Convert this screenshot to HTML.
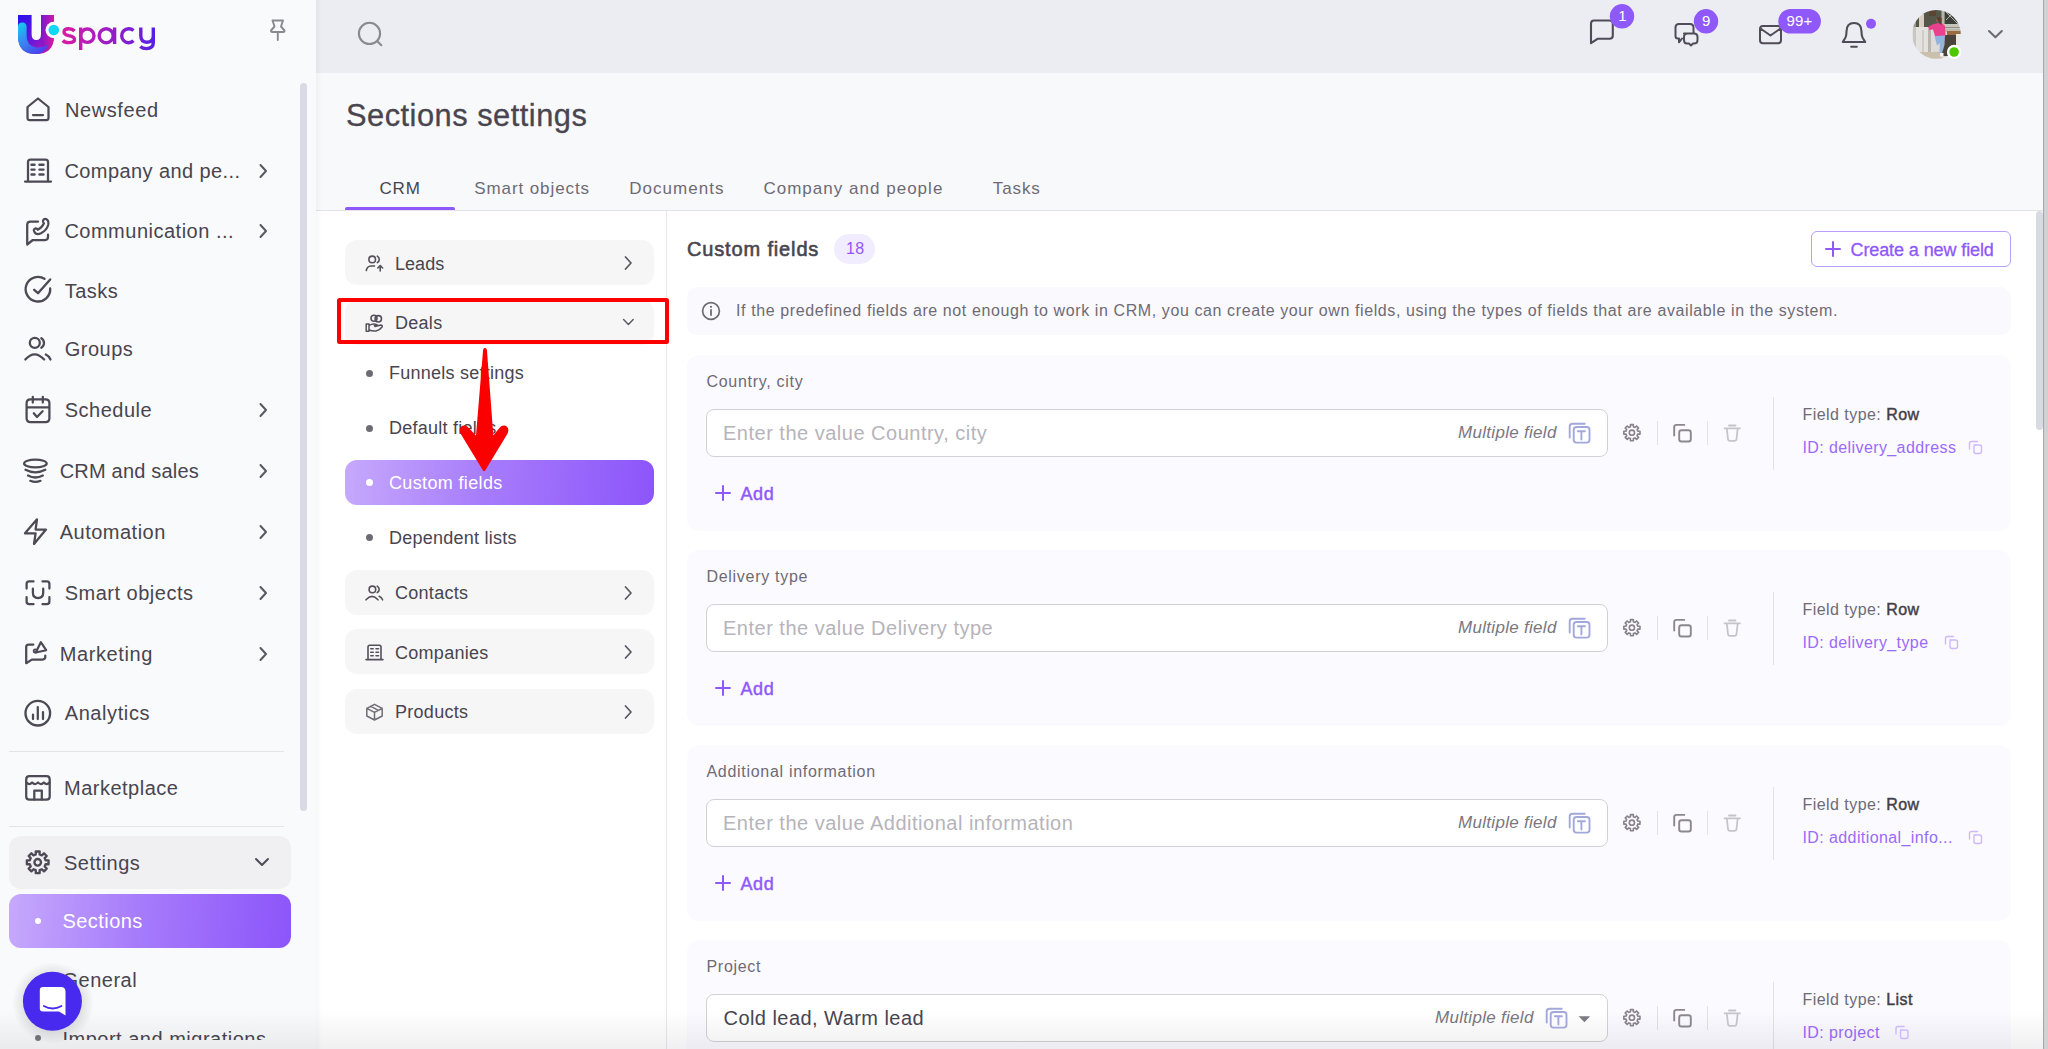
<!DOCTYPE html>
<html><head><meta charset="utf-8"><style>
html,body{margin:0;padding:0;}
body{width:2048px;height:1049px;overflow:hidden;position:relative;background:#ffffff;font-family:"Liberation Sans", sans-serif;}
.t{position:absolute;white-space:nowrap;line-height:1;font-family:"Liberation Sans", sans-serif;}
svg{overflow:visible}
</style></head><body>
<div style="position:absolute;left:0px;top:0px;width:316px;height:1049px;background:#f9fafb;"></div><div style="position:absolute;left:316px;top:0px;width:1727px;height:73px;background:#ecedf2;"></div><div style="position:absolute;left:316px;top:73px;width:1727px;height:137px;background:#f8f9fb;"></div><div style="position:absolute;left:316px;top:210px;width:1727px;height:1px;background:#e3e3e6;"></div><div style="position:absolute;left:316px;top:211px;width:1727px;height:838px;background:#ffffff;"></div><div style="position:absolute;left:316px;top:0px;width:6px;height:1049px;background:linear-gradient(to right,rgba(0,0,0,0.035),rgba(0,0,0,0));"></div><div style="position:absolute;left:666px;top:211px;width:1px;height:838px;background:#e8e8eb;"></div><div style="position:absolute;left:2043px;top:0px;width:1px;height:1049px;background:#a6a6a8;"></div><div style="position:absolute;left:2044px;top:0px;width:4px;height:1049px;background:#d0d1d3;"></div><div style="position:absolute;left:2036px;top:211px;width:7px;height:219px;background:#d9dbe3;border-radius:4px;"></div><div style="position:absolute;left:300px;top:83px;width:7px;height:728px;background:#d9dae3;border-radius:4px;"></div><div class="t" style="left:64.9px;top:99.77px;font-size:20px;color:#48454f;font-weight:400;letter-spacing:0.6px;font-style:normal;">Newsfeed</div><div class="t" style="left:64.4px;top:160.67px;font-size:20px;color:#48454f;font-weight:400;letter-spacing:0.42px;font-style:normal;">Company and pe...</div><svg style="position:absolute;left:256.5px;top:162.6px;" width="12" height="16" viewBox="0 0 12 16" fill="none"><path d="M3.5 2 L9 8 L3.5 14" stroke="#5a5761" stroke-width="2" stroke-linecap="round" stroke-linejoin="round"/></svg><div class="t" style="left:64.4px;top:221.47px;font-size:20px;color:#48454f;font-weight:400;letter-spacing:0.5px;font-style:normal;">Communication ...</div><svg style="position:absolute;left:256.5px;top:223.4px;" width="12" height="16" viewBox="0 0 12 16" fill="none"><path d="M3.5 2 L9 8 L3.5 14" stroke="#5a5761" stroke-width="2" stroke-linecap="round" stroke-linejoin="round"/></svg><div class="t" style="left:64.7px;top:280.77px;font-size:20px;color:#48454f;font-weight:400;letter-spacing:0.5px;font-style:normal;">Tasks</div><div class="t" style="left:64.7px;top:339.27px;font-size:20px;color:#48454f;font-weight:400;letter-spacing:0.5px;font-style:normal;">Groups</div><div class="t" style="left:64.7px;top:400.47px;font-size:20px;color:#48454f;font-weight:400;letter-spacing:0.5px;font-style:normal;">Schedule</div><svg style="position:absolute;left:256.5px;top:402.4px;" width="12" height="16" viewBox="0 0 12 16" fill="none"><path d="M3.5 2 L9 8 L3.5 14" stroke="#5a5761" stroke-width="2" stroke-linecap="round" stroke-linejoin="round"/></svg><div class="t" style="left:59.7px;top:461.07px;font-size:20px;color:#48454f;font-weight:400;letter-spacing:0.2px;font-style:normal;">CRM and sales</div><svg style="position:absolute;left:256.5px;top:463px;" width="12" height="16" viewBox="0 0 12 16" fill="none"><path d="M3.5 2 L9 8 L3.5 14" stroke="#5a5761" stroke-width="2" stroke-linecap="round" stroke-linejoin="round"/></svg><div class="t" style="left:59.7px;top:522.27px;font-size:20px;color:#48454f;font-weight:400;letter-spacing:0.5px;font-style:normal;">Automation</div><svg style="position:absolute;left:256.5px;top:524.2px;" width="12" height="16" viewBox="0 0 12 16" fill="none"><path d="M3.5 2 L9 8 L3.5 14" stroke="#5a5761" stroke-width="2" stroke-linecap="round" stroke-linejoin="round"/></svg><div class="t" style="left:64.7px;top:583.47px;font-size:20px;color:#48454f;font-weight:400;letter-spacing:0.5px;font-style:normal;">Smart objects</div><svg style="position:absolute;left:256.5px;top:585.4px;" width="12" height="16" viewBox="0 0 12 16" fill="none"><path d="M3.5 2 L9 8 L3.5 14" stroke="#5a5761" stroke-width="2" stroke-linecap="round" stroke-linejoin="round"/></svg><div class="t" style="left:59.7px;top:644.17px;font-size:20px;color:#48454f;font-weight:400;letter-spacing:0.6px;font-style:normal;">Marketing</div><svg style="position:absolute;left:256.5px;top:646.1px;" width="12" height="16" viewBox="0 0 12 16" fill="none"><path d="M3.5 2 L9 8 L3.5 14" stroke="#5a5761" stroke-width="2" stroke-linecap="round" stroke-linejoin="round"/></svg><div class="t" style="left:64.7px;top:703.17px;font-size:20px;color:#48454f;font-weight:400;letter-spacing:0.6px;font-style:normal;">Analytics</div><div class="t" style="left:64.0px;top:778.47px;font-size:20px;color:#48454f;font-weight:400;letter-spacing:0.5px;font-style:normal;">Marketplace</div><div style="position:absolute;left:9px;top:751px;width:275px;height:1px;background:#e4e4e8;"></div><div style="position:absolute;left:9px;top:826px;width:275px;height:1px;background:#e4e4e8;"></div><div style="position:absolute;left:9px;top:836px;width:282px;height:53px;background:#f0f0f3;border-radius:12px;"></div><div class="t" style="left:64.0px;top:852.67px;font-size:20px;color:#48454f;font-weight:400;letter-spacing:0.5px;font-style:normal;">Settings</div><svg style="position:absolute;left:254.0px;top:857.0px;" width="16.0" height="10.0" viewBox="0 0 16 10" fill="none"><path d="M2 2 L8 8 L14 2" stroke="#4f4b57" stroke-width="2" stroke-linecap="round" stroke-linejoin="round"/></svg><div style="position:absolute;left:9px;top:894px;width:282px;height:54px;background:linear-gradient(95deg,#c6a9fc 0%,#a77cfb 45%,#8c55fa 100%);border-radius:12px;"></div><div style="position:absolute;left:35px;top:918px;width:6px;height:6px;background:#fff;border-radius:50%;"></div><div class="t" style="left:62.5px;top:911.17px;font-size:20px;color:#ffffff;font-weight:400;letter-spacing:0.45px;font-style:normal;">Sections</div><div style="position:absolute;left:35px;top:977px;width:6px;height:6px;background:#6e6b75;border-radius:50%;"></div><div class="t" style="left:62.5px;top:969.87px;font-size:20px;color:#48454f;font-weight:400;letter-spacing:0.5px;font-style:normal;">General</div><div style="position:absolute;left:34.8px;top:1035px;width:6.400000000000006px;height:6.400000000000091px;background:#7a7780;border-radius:50%;"></div><div style="position:absolute;left:0;top:1000px;width:300px;height:40px;overflow:hidden"><div class="t" style="left:62.5px;top:29.07px;font-size:20px;color:#48454f;font-weight:400;letter-spacing:0.5px;font-style:normal;">Import and migrations</div></div><div class="t" style="left:346.0px;top:100.83px;font-size:30.8px;color:#48454f;font-weight:400;letter-spacing:0.5px;font-style:normal;-webkit-text-stroke:0.3px #48454f;">Sections settings</div><div class="t" style="left:379.4px;top:180.11px;font-size:17px;color:#48454f;font-weight:400;letter-spacing:0.9px;font-style:normal;">CRM</div><div class="t" style="left:474.3px;top:180.11px;font-size:17px;color:#6e6b75;font-weight:400;letter-spacing:0.9px;font-style:normal;">Smart objects</div><div class="t" style="left:629.3px;top:180.11px;font-size:17px;color:#6e6b75;font-weight:400;letter-spacing:1.02px;font-style:normal;">Documents</div><div class="t" style="left:763.4px;top:180.11px;font-size:17px;color:#6e6b75;font-weight:400;letter-spacing:1.02px;font-style:normal;">Company and people</div><div class="t" style="left:992.8px;top:180.11px;font-size:17px;color:#6e6b75;font-weight:400;letter-spacing:0.9px;font-style:normal;">Tasks</div><div style="position:absolute;left:345px;top:207px;width:110px;height:3px;background:#8f58fb;border-radius:2px 2px 0 0;"></div><div style="position:absolute;left:345px;top:240px;width:309px;height:45px;background:#f6f6f7;border-radius:12px;"></div><div class="t" style="left:395.0px;top:254.76px;font-size:18px;color:#48454f;font-weight:400;letter-spacing:0.05px;font-style:normal;">Leads</div><svg style="position:absolute;left:622px;top:254.5px;" width="12" height="16" viewBox="0 0 12 16" fill="none"><path d="M3.5 2 L9 8 L3.5 14" stroke="#5a5761" stroke-width="1.7" stroke-linecap="round" stroke-linejoin="round"/></svg><div style="position:absolute;left:345px;top:300px;width:309px;height:45px;background:#f6f6f7;border-radius:12px;"></div><div class="t" style="left:395.0px;top:314.26px;font-size:18px;color:#48454f;font-weight:400;letter-spacing:0.28px;font-style:normal;">Deals</div><svg style="position:absolute;left:621.6px;top:318.0px;" width="12.8" height="8.0" viewBox="0 0 16 10" fill="none"><path d="M2 2 L8 8 L14 2" stroke="#5a5761" stroke-width="1.8" stroke-linecap="round" stroke-linejoin="round"/></svg><div style="position:absolute;left:345px;top:570px;width:309px;height:45px;background:#f6f6f7;border-radius:12px;"></div><div class="t" style="left:395.0px;top:584.06px;font-size:18px;color:#48454f;font-weight:400;letter-spacing:0.28px;font-style:normal;">Contacts</div><svg style="position:absolute;left:622px;top:584.5px;" width="12" height="16" viewBox="0 0 12 16" fill="none"><path d="M3.5 2 L9 8 L3.5 14" stroke="#5a5761" stroke-width="1.7" stroke-linecap="round" stroke-linejoin="round"/></svg><div style="position:absolute;left:345px;top:629px;width:309px;height:45px;background:#f6f6f7;border-radius:12px;"></div><div class="t" style="left:395.0px;top:643.66px;font-size:18px;color:#48454f;font-weight:400;letter-spacing:0.28px;font-style:normal;">Companies</div><svg style="position:absolute;left:622px;top:643.5px;" width="12" height="16" viewBox="0 0 12 16" fill="none"><path d="M3.5 2 L9 8 L3.5 14" stroke="#5a5761" stroke-width="1.7" stroke-linecap="round" stroke-linejoin="round"/></svg><div style="position:absolute;left:345px;top:689px;width:309px;height:45px;background:#f6f6f7;border-radius:12px;"></div><div class="t" style="left:395.0px;top:703.26px;font-size:18px;color:#48454f;font-weight:400;letter-spacing:0.28px;font-style:normal;">Products</div><svg style="position:absolute;left:622px;top:703.5px;" width="12" height="16" viewBox="0 0 12 16" fill="none"><path d="M3.5 2 L9 8 L3.5 14" stroke="#5a5761" stroke-width="1.7" stroke-linecap="round" stroke-linejoin="round"/></svg><div style="position:absolute;left:366px;top:369.5px;width:7px;height:7.0px;background:#6e6b75;border-radius:50%;"></div><div class="t" style="left:389.0px;top:364.06px;font-size:18px;color:#48454f;font-weight:400;letter-spacing:0.25px;font-style:normal;">Funnels settings</div><div style="position:absolute;left:366px;top:424.5px;width:7px;height:7.0px;background:#6e6b75;border-radius:50%;"></div><div class="t" style="left:389.0px;top:419.26px;font-size:18px;color:#48454f;font-weight:400;letter-spacing:0.25px;font-style:normal;">Default fields</div><div style="position:absolute;left:366px;top:533.9px;width:7px;height:7.0px;background:#6e6b75;border-radius:50%;"></div><div class="t" style="left:389.0px;top:529.26px;font-size:18px;color:#48454f;font-weight:400;letter-spacing:0.25px;font-style:normal;">Dependent lists</div><div style="position:absolute;left:345px;top:460px;width:309px;height:45px;background:linear-gradient(95deg,#c6a9fc 0%,#a77cfb 45%,#8c55fa 100%);border-radius:12px;"></div><div style="position:absolute;left:366px;top:479px;width:7px;height:7px;background:#fff;border-radius:50%;"></div><div class="t" style="left:389.0px;top:474.16px;font-size:18px;color:#ffffff;font-weight:400;letter-spacing:0.35px;font-style:normal;">Custom fields</div><div style="position:absolute;left:337px;top:298px;width:332px;height:46px;border:4px solid #ff0000;border-radius:2.5px;box-sizing:border-box;"></div><div class="t" style="left:687.0px;top:239.27px;font-size:20px;color:#48454f;font-weight:400;letter-spacing:0.85px;font-style:normal;-webkit-text-stroke:0.6px #48454f;">Custom fields</div><div style="position:absolute;left:834px;top:234px;width:41px;height:29.5px;background:#f1ecfe;border-radius:15px;"></div><div class="t" style="left:846.0px;top:241.46px;font-size:16px;color:#8f58fb;font-weight:400;letter-spacing:0.3px;font-style:normal;">18</div><div style="position:absolute;left:1811px;top:231px;width:200px;height:36px;border:1.5px solid #bb9dfb;border-radius:6px;box-sizing:border-box;"></div><svg style="position:absolute;left:1825px;top:241px;" width="16" height="16" viewBox="0 0 16 16" fill="none"><path d="M8 1V15M1 8H15" stroke="#8f58fb" stroke-width="2" stroke-linecap="round"/></svg><div class="t" style="left:1850.5px;top:240.56px;font-size:18px;color:#8f58fb;font-weight:400;letter-spacing:-0.1px;font-style:normal;-webkit-text-stroke:0.3px #8f58fb;">Create a new field</div><div style="position:absolute;left:687px;top:287px;width:1324px;height:48px;background:#faf9fd;border-radius:10px;"></div><div class="t" style="left:736.0px;top:303.36px;font-size:16px;color:#6e6b75;font-weight:400;letter-spacing:0.6px;font-style:normal;">If the predefined fields are not enough to work in CRM, you can create your own fields, using the types of fields that are available in the system.</div><div style="position:absolute;left:687px;top:355px;width:1324px;height:175.5px;background:#fbfaff;border-radius:12px;"></div><div class="t" style="left:706.5px;top:373.96px;font-size:16px;color:#6e6b75;font-weight:400;letter-spacing:0.7px;font-style:normal;">Country, city</div><div style="position:absolute;left:706px;top:409px;width:902px;height:48px;background:#fff;border:1px solid #d2d1d6;border-radius:8px;box-sizing:border-box;"></div><div class="t" style="left:723.0px;top:423.47px;font-size:20px;color:#b6b4ba;font-weight:400;letter-spacing:0.5px;font-style:normal;">Enter the value Country, city</div><div class="t" style="left:1458.0px;top:424.21px;font-size:17px;color:#7a7780;font-weight:400;letter-spacing:0.3px;font-style:italic;">Multiple field</div><div class="t" style="left:1802.5px;top:406.66px;font-size:16px;color:#6e6b75;font-weight:400;letter-spacing:0.45px;font-style:normal;">Field type: <span style="color:#423f48;-webkit-text-stroke:0.45px #423f48">Row</span></div><div class="t" style="left:1802.5px;top:440.16px;font-size:16px;color:#9a6bfa;font-weight:400;letter-spacing:0.4px;font-style:normal;">ID: delivery_address</div><div style="position:absolute;left:1657px;top:421px;width:1px;height:24px;background:#e2e2e5;"></div><div style="position:absolute;left:1707px;top:421px;width:1px;height:24px;background:#e2e2e5;"></div><div style="position:absolute;left:1773px;top:397px;width:1px;height:73px;background:#e2e2e5;"></div><svg style="position:absolute;left:715px;top:485px;" width="16" height="16" viewBox="0 0 16 16" fill="none"><path d="M8 1V15M1 8H15" stroke="#8f58fb" stroke-width="2" stroke-linecap="round"/></svg><div class="t" style="left:740.5px;top:484.76px;font-size:18px;color:#8f58fb;font-weight:400;letter-spacing:0.6px;font-style:normal;-webkit-text-stroke:0.45px #8f58fb;">Add</div><div style="position:absolute;left:687px;top:550px;width:1324px;height:175.5px;background:#fbfaff;border-radius:12px;"></div><div class="t" style="left:706.5px;top:568.96px;font-size:16px;color:#6e6b75;font-weight:400;letter-spacing:0.7px;font-style:normal;">Delivery type</div><div style="position:absolute;left:706px;top:604px;width:902px;height:48px;background:#fff;border:1px solid #d2d1d6;border-radius:8px;box-sizing:border-box;"></div><div class="t" style="left:723.0px;top:618.47px;font-size:20px;color:#b6b4ba;font-weight:400;letter-spacing:0.5px;font-style:normal;">Enter the value Delivery type</div><div class="t" style="left:1458.0px;top:619.21px;font-size:17px;color:#7a7780;font-weight:400;letter-spacing:0.3px;font-style:italic;">Multiple field</div><div class="t" style="left:1802.5px;top:601.66px;font-size:16px;color:#6e6b75;font-weight:400;letter-spacing:0.45px;font-style:normal;">Field type: <span style="color:#423f48;-webkit-text-stroke:0.45px #423f48">Row</span></div><div class="t" style="left:1802.5px;top:635.16px;font-size:16px;color:#9a6bfa;font-weight:400;letter-spacing:0.4px;font-style:normal;">ID: delivery_type</div><div style="position:absolute;left:1657px;top:616px;width:1px;height:24px;background:#e2e2e5;"></div><div style="position:absolute;left:1707px;top:616px;width:1px;height:24px;background:#e2e2e5;"></div><div style="position:absolute;left:1773px;top:592px;width:1px;height:73px;background:#e2e2e5;"></div><svg style="position:absolute;left:715px;top:680px;" width="16" height="16" viewBox="0 0 16 16" fill="none"><path d="M8 1V15M1 8H15" stroke="#8f58fb" stroke-width="2" stroke-linecap="round"/></svg><div class="t" style="left:740.5px;top:679.76px;font-size:18px;color:#8f58fb;font-weight:400;letter-spacing:0.6px;font-style:normal;-webkit-text-stroke:0.45px #8f58fb;">Add</div><div style="position:absolute;left:687px;top:745px;width:1324px;height:175.5px;background:#fbfaff;border-radius:12px;"></div><div class="t" style="left:706.5px;top:763.96px;font-size:16px;color:#6e6b75;font-weight:400;letter-spacing:0.7px;font-style:normal;">Additional information</div><div style="position:absolute;left:706px;top:799px;width:902px;height:48px;background:#fff;border:1px solid #d2d1d6;border-radius:8px;box-sizing:border-box;"></div><div class="t" style="left:723.0px;top:813.47px;font-size:20px;color:#b6b4ba;font-weight:400;letter-spacing:0.5px;font-style:normal;">Enter the value Additional information</div><div class="t" style="left:1458.0px;top:814.21px;font-size:17px;color:#7a7780;font-weight:400;letter-spacing:0.3px;font-style:italic;">Multiple field</div><div class="t" style="left:1802.5px;top:796.66px;font-size:16px;color:#6e6b75;font-weight:400;letter-spacing:0.45px;font-style:normal;">Field type: <span style="color:#423f48;-webkit-text-stroke:0.45px #423f48">Row</span></div><div class="t" style="left:1802.5px;top:830.16px;font-size:16px;color:#9a6bfa;font-weight:400;letter-spacing:0.4px;font-style:normal;">ID: additional_info...</div><div style="position:absolute;left:1657px;top:811px;width:1px;height:24px;background:#e2e2e5;"></div><div style="position:absolute;left:1707px;top:811px;width:1px;height:24px;background:#e2e2e5;"></div><div style="position:absolute;left:1773px;top:787px;width:1px;height:73px;background:#e2e2e5;"></div><svg style="position:absolute;left:715px;top:875px;" width="16" height="16" viewBox="0 0 16 16" fill="none"><path d="M8 1V15M1 8H15" stroke="#8f58fb" stroke-width="2" stroke-linecap="round"/></svg><div class="t" style="left:740.5px;top:874.76px;font-size:18px;color:#8f58fb;font-weight:400;letter-spacing:0.6px;font-style:normal;-webkit-text-stroke:0.45px #8f58fb;">Add</div><div style="position:absolute;left:687px;top:940px;width:1324px;height:175.5px;background:#fbfaff;border-radius:12px;"></div><div class="t" style="left:706.5px;top:958.96px;font-size:16px;color:#6e6b75;font-weight:400;letter-spacing:0.7px;font-style:normal;">Project</div><div style="position:absolute;left:706px;top:994px;width:902px;height:48px;background:#fff;border:1px solid #d2d1d6;border-radius:8px;box-sizing:border-box;"></div><div class="t" style="left:723.5px;top:1008.47px;font-size:20px;color:#48454f;font-weight:400;letter-spacing:0.45px;font-style:normal;">Cold lead, Warm lead</div><div class="t" style="left:1435.0px;top:1009.21px;font-size:17px;color:#7a7780;font-weight:400;letter-spacing:0.3px;font-style:italic;">Multiple field</div><div class="t" style="left:1802.5px;top:991.66px;font-size:16px;color:#6e6b75;font-weight:400;letter-spacing:0.45px;font-style:normal;">Field type: <span style="color:#423f48;-webkit-text-stroke:0.45px #423f48">List</span></div><div class="t" style="left:1802.5px;top:1025.16px;font-size:16px;color:#9a6bfa;font-weight:400;letter-spacing:0.4px;font-style:normal;">ID: project</div><div style="position:absolute;left:1657px;top:1006px;width:1px;height:24px;background:#e2e2e5;"></div><div style="position:absolute;left:1707px;top:1006px;width:1px;height:24px;background:#e2e2e5;"></div><div style="position:absolute;left:1773px;top:982px;width:1px;height:73px;background:#e2e2e5;"></div><div style="position:absolute;left:0px;top:1010px;width:2043px;height:39px;background:linear-gradient(to bottom,rgba(40,40,60,0),rgba(40,40,60,0.07));"></div><svg style="position:absolute;left:0;top:0" width="2048" height="1049" viewBox="0 0 2048 1049" fill="none"><path d="M27.5 107 L38 98.5 L48.5 107 V118 Q48.5 120 46.5 120 H29.5 Q27.5 120 27.5 118 Z M33 115 H43" stroke="#4d4955" stroke-width="2.25" stroke-linecap="round" stroke-linejoin="round" fill="none" /><path d="M28 181.5 V162 Q28 159.5 30.5 159.5 H45.5 Q48 159.5 48 162 V181.5 M25 181.5 H51" stroke="#4d4955" stroke-width="2.25" stroke-linecap="round" stroke-linejoin="round" fill="none" /><path d="M31.5 164.8 H34.5 M39.5 164.8 H43.5" stroke="#4d4955" stroke-width="2.45" stroke-linecap="round" stroke-linejoin="round" fill="none" /><path d="M31.5 169.6 H34.5 M39.5 169.6 H43.5" stroke="#4d4955" stroke-width="2.45" stroke-linecap="round" stroke-linejoin="round" fill="none" /><path d="M31.5 174.4 H34.5 M39.5 174.4 H43.5" stroke="#4d4955" stroke-width="2.45" stroke-linecap="round" stroke-linejoin="round" fill="none" /><path d="M38 221.5 H30.5 Q27.2 221.5 27.2 224.8 V244.5 L32.8 240 H45 Q48 240 48 237 V234.5" stroke="#4d4955" stroke-width="2.25" stroke-linecap="round" stroke-linejoin="round" fill="none" /><path d="M34.2 231.5 Q33 229.2 35.3 228.4 Q37 228.2 37.8 229.8 Q41.8 228 44 223.3 Q42.5 222.2 43 220.5 Q44 218.5 46 219 Q49 220.5 48.3 224.5 Q47 230 41 233.3 Q36 235.5 34.2 231.5 Z" stroke="#4d4955" stroke-width="2.15" stroke-linecap="round" stroke-linejoin="round" fill="none" /><path d="M44.5 278.8 A12.3 12.3 0 1 0 50.2 288.5" stroke="#4d4955" stroke-width="2.35" stroke-linecap="round" stroke-linejoin="round" fill="none" /><path d="M34.2 289.8 L38 293.2 L50.2 279.5" stroke="#4d4955" stroke-width="2.35" stroke-linecap="round" stroke-linejoin="round" fill="none" /><path d="M34.8 337.9 A5 5 0 1 1 34.8 347.9 A5 5 0 1 1 34.8 337.9 Z" stroke="#4d4955" stroke-width="2.25" stroke-linecap="round" stroke-linejoin="round" fill="none" /><path d="M41.3 338.3 Q44 340 44 343 Q44 346 41.3 347.7" stroke="#4d4955" stroke-width="2.25" stroke-linecap="round" stroke-linejoin="round" fill="none" /><path d="M25.3 359.5 Q34.5 349 44.2 359.5 M45.8 354.5 Q49 356 50.5 359.5" stroke="#4d4955" stroke-width="2.25" stroke-linecap="round" stroke-linejoin="round" fill="none" /><path d="M30.5 399.3 H45.5 Q49.4 399.3 49.4 403.2 V418.3 Q49.4 422.2 45.5 422.2 H30.5 Q26.6 422.2 26.6 418.3 V403.2 Q26.6 399.3 30.5 399.3 Z M26.6 407.3 H49.4 M32.8 396.8 V402.5 M42.8 396.8 V402.5" stroke="#4d4955" stroke-width="2.25" stroke-linecap="round" stroke-linejoin="round" fill="none" /><path d="M33.8 413.3 L37 417 L42.6 411.3" stroke="#4d4955" stroke-width="2.25" stroke-linecap="round" stroke-linejoin="round" fill="none" /><ellipse cx="35.4" cy="463.5" rx="11.3" ry="3.9" stroke="#4d4955" stroke-width="2.25" fill="none"/><path d="M25.5 469.8 Q35.4 475 45.3 469.8 M28 475.5 Q35.4 479.5 42.8 475.5 M30.3 480.8 Q35.4 483 40.5 480.8" stroke="#4d4955" stroke-width="2.25" stroke-linecap="round" stroke-linejoin="round" fill="none" /><path d="M37 519.3 L25 533.3 H35.6 L34 544 L46 529.5 H35.6 Z" stroke="#4d4955" stroke-width="2.25" stroke-linecap="round" stroke-linejoin="round" fill="none" /><path d="M26.6 588.5 V584 Q26.6 581.4 29.2 581.4 H33.5 M42.5 581.4 H46.8 Q49.4 581.4 49.4 584 V588.5 M49.4 597 V601.6 Q49.4 604.2 46.8 604.2 H42.5 M33.5 604.2 H29.2 Q26.6 604.2 26.6 601.6 V597" stroke="#4d4955" stroke-width="2.25" stroke-linecap="round" stroke-linejoin="round" fill="none" /><path d="M32.9 588.5 V592.8 Q32.9 598 38 598 Q43.2 598 43.2 592.8 V588.5" stroke="#4d4955" stroke-width="2.25" stroke-linecap="round" stroke-linejoin="round" fill="none" /><path d="M33.3 644.5 H28.6 Q26.2 644.5 26.2 647 V663.2 L31.8 659.6 H42.5 Q45.3 659.6 45.3 656.6 V655.5" stroke="#4d4955" stroke-width="2.25" stroke-linecap="round" stroke-linejoin="round" fill="none" /><path d="M40.8 642.2 L46.2 650.2 L35.8 652.5 Z" stroke="#4d4955" stroke-width="2.15" stroke-linecap="round" stroke-linejoin="round" fill="none" /><circle cx="35.3" cy="651" r="1.6" stroke="#4d4955" stroke-width="1.85" fill="none"/><circle cx="37.8" cy="713.2" r="12.3" stroke="#4d4955" stroke-width="2.35" fill="none"/><path d="M33 714.5 V719 M37.8 707 V719 M43 712 V719" stroke="#4d4955" stroke-width="2.25" stroke-linecap="round" stroke-linejoin="round" fill="none" /><path d="M29.5 776.2 H46.5 Q49.7 776.2 49.7 779.4 V796.5 Q49.7 799.7 46.5 799.7 H29.5 Q26.2 799.7 26.2 796.5 V779.4 Q26.2 776.2 29.5 776.2 Z" stroke="#4d4955" stroke-width="2.25" stroke-linecap="round" stroke-linejoin="round" fill="none" /><path d="M26.5 782.5 Q29.3 785.5 32.1 782.5 Q35 785.5 38 782.5 Q41 785.5 43.9 782.5 Q46.7 785.5 49.5 782.5 M34.3 799.5 V790.5 H41.8 V799.5" stroke="#4d4955" stroke-width="2.25" stroke-linecap="round" stroke-linejoin="round" fill="none" /><path d="M48.53 860.37 L48.53 864.23 L45.60 864.26 L44.67 866.50 L46.72 868.59 L43.99 871.32 L41.90 869.27 L39.66 870.20 L39.63 873.13 L35.77 873.13 L35.74 870.20 L33.50 869.27 L31.41 871.32 L28.68 868.59 L30.73 866.50 L29.80 864.26 L26.87 864.23 L26.87 860.37 L29.80 860.34 L30.73 858.10 L28.68 856.01 L31.41 853.28 L33.50 855.33 L35.74 854.40 L35.77 851.47 L39.63 851.47 L39.66 854.40 L41.90 855.33 L43.99 853.28 L46.72 856.01 L44.67 858.10 L45.60 860.34 Z" stroke="#4d4955" stroke-width="2.35" stroke-linecap="round" stroke-linejoin="round" fill="none" /><circle cx="37.7" cy="862.3" r="3.3" stroke="#4d4955" stroke-width="2.35" fill="none"/><path d="M272.5 20.5 H283 L281 26.5 L284.5 30.5 Q284.8 32 283.2 32 H272.3 Q270.7 32 271 30.5 L274.5 26.5 Z M277.8 32.5 V40" stroke="#8a8990" stroke-width="1.9" stroke-linecap="round" stroke-linejoin="round" fill="none" /><circle cx="372.2" cy="259.4" r="3.3" stroke="#55515c" stroke-width="1.6" fill="none"/><path d="M377.3 256.2 Q379.3 257.5 379.3 259.4 Q379.3 261.3 377.3 262.6 M366.3 270.5 Q367 266.3 371 266 H374.5 M380.2 271 V265.8 M377.8 268 L380.2 265.5 L382.6 268" stroke="#55515c" stroke-width="1.6" stroke-linecap="round" stroke-linejoin="round" fill="none" /><circle cx="374" cy="318.2" r="3" stroke="#55515c" stroke-width="1.6" fill="none"/><circle cx="378.3" cy="318.8" r="3.2" stroke="#55515c" stroke-width="1.6" fill="none"/><path d="M366.2 324 H369 V331.3 H366.2 Z M369.2 325.5 Q372.5 323.3 375.5 324.2 L378.5 325.7 H374.3 M375 326.5 L381 325 Q383 325.5 382 327 Q380 330 376 331 Q372 331.3 369.2 330" stroke="#55515c" stroke-width="1.5" stroke-linecap="round" stroke-linejoin="round" fill="none" /><circle cx="372.4" cy="589.4" r="3.3" stroke="#55515c" stroke-width="1.6" fill="none"/><path d="M377.2 586.2 Q379.2 587.5 379.2 589.4 Q379.2 591.3 377.2 592.6 M366 599.8 Q372 593 378 599.8 M379.2 596.3 Q381.5 597.3 382.6 599.8" stroke="#55515c" stroke-width="1.6" stroke-linecap="round" stroke-linejoin="round" fill="none" /><path d="M368 659.6 V647 Q368 645.3 369.7 645.3 H379.3 Q381 645.3 381 647 V659.6 M366 659.6 H383 M370.8 648.8 H373.2 M376 648.8 H378.5 M370.8 652.3 H373.2 M376 652.3 H378.5 M370.8 655.8 H373.2 M376 655.8 H378.5" stroke="#55515c" stroke-width="1.6" stroke-linecap="round" stroke-linejoin="round" fill="none" /><path d="M374.5 704.3 L382.2 708.3 V716 L374.5 720 L366.8 716 V708.3 Z M366.8 708.3 L374.5 712.3 L382.2 708.3 M374.5 712.3 V720 M370.5 706.2 L378.3 710.3" stroke="#6f6c76" stroke-width="1.5" stroke-linecap="round" stroke-linejoin="round" fill="none" /><circle cx="369.5" cy="33.4" r="10.6" stroke="#8a8990" stroke-width="2.1" fill="none"/><path d="M377.3 41.2 L381.3 45.2" stroke="#8a8990" stroke-width="2.1" stroke-linecap="round" stroke-linejoin="round" fill="none" /><path d="M594 20.5 H609.5 Q612.8 20.5 612.8 23.8 V35.5 Q612.8 38.8 609.5 38.8 H597.5 L591 43.2 V23.8 Q591 20.5 594 20.5 Z" stroke="#4f4b57" stroke-width="2.1" stroke-linecap="round" stroke-linejoin="round" fill="none" transform="translate(1000 0)"/><circle cx="1622" cy="16.3" r="12.2" fill="#8f58fb"/><path d="M1675.5 27.5 Q1675.5 24 1679 24 H1690 Q1693.5 24 1693.5 27.5 V33 M1675.5 27.5 V36 Q1675.5 38.5 1678 38.5 H1679 V42.3 L1682 38.5" stroke="#4f4b57" stroke-width="2" stroke-linecap="round" stroke-linejoin="round" fill="none" /><path d="M1684 33.5 H1694 Q1697.5 33.5 1697.5 37 V40 Q1697.5 43.5 1694 43.5 H1693 L1691 45.5 L1689 43.5 H1687 Q1684 43.5 1684 40 V37 Q1684 33.5 1687.5 33.5" stroke="#4f4b57" stroke-width="2" stroke-linecap="round" stroke-linejoin="round" fill="none" /><circle cx="1706" cy="21.3" r="12.2" fill="#8f58fb"/><path d="M1763 26 H1778 Q1781 26 1781 29 V40.3 Q1781 43.3 1778 43.3 H1763 Q1760 43.3 1760 40.3 V29 Q1760 26 1763 26 Z M1760.5 28.5 L1770.5 35.5 L1780.5 28.5" stroke="#4f4b57" stroke-width="2" stroke-linecap="round" stroke-linejoin="round" fill="none" /><rect x="1778.3" y="9" width="42.6" height="24.6" rx="12.3" fill="#8f58fb"/><path d="M1854 23 Q1861.5 23 1861.5 31.5 Q1861.5 35.5 1862.5 37.5 L1865.2 42 H1842.8 L1845.5 37.5 Q1846.5 35.5 1846.5 31.5 Q1846.5 23 1854 23 Z M1851.2 46.8 H1856.8" stroke="#4f4b57" stroke-width="2.1" stroke-linecap="round" stroke-linejoin="round" fill="none" /><circle cx="1871" cy="23.8" r="5" fill="#8f58fb"/><path d="M1989 31 L1995.4 37.3 L2001.8 31" stroke="#6e6b75" stroke-width="2.1" stroke-linecap="round" stroke-linejoin="round" fill="none" /><circle cx="711" cy="311" r="8.4" stroke="#6e6b75" stroke-width="1.7" fill="none"/><path d="M711 309.8 V315" stroke="#6e6b75" stroke-width="1.8" stroke-linecap="round" stroke-linejoin="round" fill="none" /><circle cx="711" cy="306.8" r="1.1" fill="#6e6b75"/><path d="M1584.7 423.8 H1572.5 Q1569.7 423.8 1569.7 426.6 V437.5" stroke="#a3a8dc" stroke-width="1.9" stroke-linecap="round" stroke-linejoin="round" fill="none" /><path d="M1576.5 427 H1586.7 Q1589.5 427 1589.5 429.8 V439.8 Q1589.5 442.6 1586.7 442.6 H1576.5 Q1573.7 442.6 1573.7 439.8 V429.8 Q1573.7 427 1576.5 427 Z M1577.9 431.2 H1584.9 M1581.4 431.2 V439.5" stroke="#a3a8dc" stroke-width="1.9" stroke-linecap="round" stroke-linejoin="round" fill="none" /><path d="M1639.97 431.26 L1639.97 434.14 L1637.79 434.16 L1637.10 435.83 L1638.63 437.39 L1636.59 439.43 L1635.03 437.90 L1633.36 438.59 L1633.34 440.77 L1630.46 440.77 L1630.44 438.59 L1628.77 437.90 L1627.21 439.43 L1625.17 437.39 L1626.70 435.83 L1626.01 434.16 L1623.83 434.14 L1623.83 431.26 L1626.01 431.24 L1626.70 429.57 L1625.17 428.01 L1627.21 425.97 L1628.77 427.50 L1630.44 426.81 L1630.46 424.63 L1633.34 424.63 L1633.36 426.81 L1635.03 427.50 L1636.59 425.97 L1638.63 428.01 L1637.10 429.57 L1637.79 431.24 Z" stroke="#86838c" stroke-width="1.6" stroke-linecap="round" stroke-linejoin="round" fill="none" /><circle cx="1631.9" cy="432.7" r="2.6" stroke="#86838c" stroke-width="1.6" fill="none"/><path d="M1684.3 424.9 H1676.5 Q1674.2 424.9 1674.2 427.2 V435.5 M1681.5 430.2 H1688.5 Q1690.8 430.2 1690.8 432.5 V439.2 Q1690.8 441.5 1688.5 441.5 H1681.5 Q1679.2 441.5 1679.2 439.2 V432.5 Q1679.2 430.2 1681.5 430.2 Z" stroke="#8a878f" stroke-width="1.9" stroke-linecap="round" stroke-linejoin="round" fill="none" /><path d="M1724.5 428.3 H1740 M1729 425.5 H1735.5 M1726.8 428.5 L1728 439 Q1728.2 440.8 1730 440.8 H1734.5 Q1736.3 440.8 1736.5 439 L1737.7 428.5" stroke="#c5c4ca" stroke-width="1.8" stroke-linecap="round" stroke-linejoin="round" fill="none" /><path d="M1977.5 441.5 H1971.5 Q1969.5 441.5 1969.5 443.5 V449 M1974.0 445 H1979.5 Q1981.5 445 1981.5 447 V451.5 Q1981.5 453.5 1979.5 453.5 H1976.0 Q1974.0 453.5 1974.0 451.5 V447 Q1974.0 445 1976.0 445 Z" stroke="#cdb9fb" stroke-width="1.4" stroke-linecap="round" stroke-linejoin="round" fill="none" /><path d="M1584.7 618.8 H1572.5 Q1569.7 618.8 1569.7 621.6 V632.5" stroke="#a3a8dc" stroke-width="1.9" stroke-linecap="round" stroke-linejoin="round" fill="none" /><path d="M1576.5 622 H1586.7 Q1589.5 622 1589.5 624.8 V634.8 Q1589.5 637.6 1586.7 637.6 H1576.5 Q1573.7 637.6 1573.7 634.8 V624.8 Q1573.7 622 1576.5 622 Z M1577.9 626.2 H1584.9 M1581.4 626.2 V634.5" stroke="#a3a8dc" stroke-width="1.9" stroke-linecap="round" stroke-linejoin="round" fill="none" /><path d="M1639.97 626.26 L1639.97 629.14 L1637.79 629.16 L1637.10 630.83 L1638.63 632.39 L1636.59 634.43 L1635.03 632.90 L1633.36 633.59 L1633.34 635.77 L1630.46 635.77 L1630.44 633.59 L1628.77 632.90 L1627.21 634.43 L1625.17 632.39 L1626.70 630.83 L1626.01 629.16 L1623.83 629.14 L1623.83 626.26 L1626.01 626.24 L1626.70 624.57 L1625.17 623.01 L1627.21 620.97 L1628.77 622.50 L1630.44 621.81 L1630.46 619.63 L1633.34 619.63 L1633.36 621.81 L1635.03 622.50 L1636.59 620.97 L1638.63 623.01 L1637.10 624.57 L1637.79 626.24 Z" stroke="#86838c" stroke-width="1.6" stroke-linecap="round" stroke-linejoin="round" fill="none" /><circle cx="1631.9" cy="627.7" r="2.6" stroke="#86838c" stroke-width="1.6" fill="none"/><path d="M1684.3 619.9 H1676.5 Q1674.2 619.9 1674.2 622.2 V630.5 M1681.5 625.2 H1688.5 Q1690.8 625.2 1690.8 627.5 V634.2 Q1690.8 636.5 1688.5 636.5 H1681.5 Q1679.2 636.5 1679.2 634.2 V627.5 Q1679.2 625.2 1681.5 625.2 Z" stroke="#8a878f" stroke-width="1.9" stroke-linecap="round" stroke-linejoin="round" fill="none" /><path d="M1724.5 623.3 H1740 M1729 620.5 H1735.5 M1726.8 623.5 L1728 634 Q1728.2 635.8 1730 635.8 H1734.5 Q1736.3 635.8 1736.5 634 L1737.7 623.5" stroke="#c5c4ca" stroke-width="1.8" stroke-linecap="round" stroke-linejoin="round" fill="none" /><path d="M1953.5 636.5 H1947.5 Q1945.5 636.5 1945.5 638.5 V644 M1950.0 640 H1955.5 Q1957.5 640 1957.5 642 V646.5 Q1957.5 648.5 1955.5 648.5 H1952.0 Q1950.0 648.5 1950.0 646.5 V642 Q1950.0 640 1952.0 640 Z" stroke="#cdb9fb" stroke-width="1.4" stroke-linecap="round" stroke-linejoin="round" fill="none" /><path d="M1584.7 813.8 H1572.5 Q1569.7 813.8 1569.7 816.6 V827.5" stroke="#a3a8dc" stroke-width="1.9" stroke-linecap="round" stroke-linejoin="round" fill="none" /><path d="M1576.5 817 H1586.7 Q1589.5 817 1589.5 819.8 V829.8 Q1589.5 832.6 1586.7 832.6 H1576.5 Q1573.7 832.6 1573.7 829.8 V819.8 Q1573.7 817 1576.5 817 Z M1577.9 821.2 H1584.9 M1581.4 821.2 V829.5" stroke="#a3a8dc" stroke-width="1.9" stroke-linecap="round" stroke-linejoin="round" fill="none" /><path d="M1639.97 821.26 L1639.97 824.14 L1637.79 824.16 L1637.10 825.83 L1638.63 827.39 L1636.59 829.43 L1635.03 827.90 L1633.36 828.59 L1633.34 830.77 L1630.46 830.77 L1630.44 828.59 L1628.77 827.90 L1627.21 829.43 L1625.17 827.39 L1626.70 825.83 L1626.01 824.16 L1623.83 824.14 L1623.83 821.26 L1626.01 821.24 L1626.70 819.57 L1625.17 818.01 L1627.21 815.97 L1628.77 817.50 L1630.44 816.81 L1630.46 814.63 L1633.34 814.63 L1633.36 816.81 L1635.03 817.50 L1636.59 815.97 L1638.63 818.01 L1637.10 819.57 L1637.79 821.24 Z" stroke="#86838c" stroke-width="1.6" stroke-linecap="round" stroke-linejoin="round" fill="none" /><circle cx="1631.9" cy="822.7" r="2.6" stroke="#86838c" stroke-width="1.6" fill="none"/><path d="M1684.3 814.9 H1676.5 Q1674.2 814.9 1674.2 817.2 V825.5 M1681.5 820.2 H1688.5 Q1690.8 820.2 1690.8 822.5 V829.2 Q1690.8 831.5 1688.5 831.5 H1681.5 Q1679.2 831.5 1679.2 829.2 V822.5 Q1679.2 820.2 1681.5 820.2 Z" stroke="#8a878f" stroke-width="1.9" stroke-linecap="round" stroke-linejoin="round" fill="none" /><path d="M1724.5 818.3 H1740 M1729 815.5 H1735.5 M1726.8 818.5 L1728 829 Q1728.2 830.8 1730 830.8 H1734.5 Q1736.3 830.8 1736.5 829 L1737.7 818.5" stroke="#c5c4ca" stroke-width="1.8" stroke-linecap="round" stroke-linejoin="round" fill="none" /><path d="M1977.5 831.5 H1971.5 Q1969.5 831.5 1969.5 833.5 V839 M1974.0 835 H1979.5 Q1981.5 835 1981.5 837 V841.5 Q1981.5 843.5 1979.5 843.5 H1976.0 Q1974.0 843.5 1974.0 841.5 V837 Q1974.0 835 1976.0 835 Z" stroke="#cdb9fb" stroke-width="1.4" stroke-linecap="round" stroke-linejoin="round" fill="none" /><path d="M1561.7 1008.8 H1549.5 Q1546.7 1008.8 1546.7 1011.6 V1022.5" stroke="#a3a8dc" stroke-width="1.9" stroke-linecap="round" stroke-linejoin="round" fill="none" /><path d="M1553.5 1012 H1563.7 Q1566.5 1012 1566.5 1014.8 V1024.8 Q1566.5 1027.6 1563.7 1027.6 H1553.5 Q1550.7 1027.6 1550.7 1024.8 V1014.8 Q1550.7 1012 1553.5 1012 Z M1554.9 1016.2 H1561.9 M1558.4 1016.2 V1024.5" stroke="#a3a8dc" stroke-width="1.9" stroke-linecap="round" stroke-linejoin="round" fill="none" /><path d="M1578.6 1016.2 H1590.2 L1584.4 1022.2 Z" fill="#7d7a83"/><path d="M1639.97 1016.26 L1639.97 1019.14 L1637.79 1019.16 L1637.10 1020.83 L1638.63 1022.39 L1636.59 1024.43 L1635.03 1022.90 L1633.36 1023.59 L1633.34 1025.77 L1630.46 1025.77 L1630.44 1023.59 L1628.77 1022.90 L1627.21 1024.43 L1625.17 1022.39 L1626.70 1020.83 L1626.01 1019.16 L1623.83 1019.14 L1623.83 1016.26 L1626.01 1016.24 L1626.70 1014.57 L1625.17 1013.01 L1627.21 1010.97 L1628.77 1012.50 L1630.44 1011.81 L1630.46 1009.63 L1633.34 1009.63 L1633.36 1011.81 L1635.03 1012.50 L1636.59 1010.97 L1638.63 1013.01 L1637.10 1014.57 L1637.79 1016.24 Z" stroke="#86838c" stroke-width="1.6" stroke-linecap="round" stroke-linejoin="round" fill="none" /><circle cx="1631.9" cy="1017.7" r="2.6" stroke="#86838c" stroke-width="1.6" fill="none"/><path d="M1684.3 1009.9 H1676.5 Q1674.2 1009.9 1674.2 1012.2 V1020.5 M1681.5 1015.2 H1688.5 Q1690.8 1015.2 1690.8 1017.5 V1024.2 Q1690.8 1026.5 1688.5 1026.5 H1681.5 Q1679.2 1026.5 1679.2 1024.2 V1017.5 Q1679.2 1015.2 1681.5 1015.2 Z" stroke="#8a878f" stroke-width="1.9" stroke-linecap="round" stroke-linejoin="round" fill="none" /><path d="M1724.5 1013.3 H1740 M1729 1010.5 H1735.5 M1726.8 1013.5 L1728 1024 Q1728.2 1025.8 1730 1025.8 H1734.5 Q1736.3 1025.8 1736.5 1024 L1737.7 1013.5" stroke="#c5c4ca" stroke-width="1.8" stroke-linecap="round" stroke-linejoin="round" fill="none" /><path d="M1904 1026.5 H1898 Q1896 1026.5 1896 1028.5 V1034 M1900.5 1030 H1906 Q1908 1030 1908 1032 V1036.5 Q1908 1038.5 1906 1038.5 H1902.5 Q1900.5 1038.5 1900.5 1036.5 V1032 Q1900.5 1030 1902.5 1030 Z" stroke="#cdb9fb" stroke-width="1.4" stroke-linecap="round" stroke-linejoin="round" fill="none" /><path d="M485 348 C486.3 348 486.9 349.2 487 351 L493.3 435.5 L499.8 427.5 C501.8 425 505 424.8 507 426.8 C508.8 428.6 508.8 431.5 507.3 434 L485.2 470.5 C484.6 471.5 483.6 471.5 483 470.5 L460.8 434 C459.3 431.5 459.3 428.6 461.1 426.8 C463.1 424.8 466.3 425 468.3 427.5 L476 435.5 L483 351 C483.1 349.2 483.7 348 485 348 Z" fill="#fb0000"/></svg><svg style="position:absolute;left:0;top:0" width="170" height="70" viewBox="0 0 170 70" fill="none">
<defs>
<linearGradient id="ug" x1="18" y1="15" x2="54" y2="54" gradientUnits="userSpaceOnUse">
<stop offset="0" stop-color="#2a10f0"/><stop offset="0.55" stop-color="#6a18d8"/><stop offset="1" stop-color="#e21a9c"/></linearGradient>
<linearGradient id="ug2" x1="18" y1="22" x2="40" y2="54" gradientUnits="userSpaceOnUse">
<stop offset="0" stop-color="#11d3f3"/><stop offset="0.6" stop-color="#3d7af0"/><stop offset="1" stop-color="#4a3cf0"/></linearGradient>
<linearGradient id="sg" x1="62" y1="0" x2="155" y2="0" gradientUnits="userSpaceOnUse">
<stop offset="0" stop-color="#d81ca4"/><stop offset="0.5" stop-color="#9a1ec4"/><stop offset="1" stop-color="#5520e2"/></linearGradient>
<linearGradient id="rg" x1="41" y1="0" x2="54" y2="0" gradientUnits="userSpaceOnUse">
<stop offset="0" stop-color="#7a18d0"/><stop offset="1" stop-color="#e41a9a"/></linearGradient>
</defs>
<path d="M18 15 H31.6 V34 Q31.6 40 36.3 40 Q41 40 41 34 V15 H54 V36 Q54 54 36 54 Q18 54 18 36 Z" fill="url(#ug)"/>
<path d="M41 15 H54 V36 Q54 46 47 50.5 Q41 53 41 40 Z" fill="url(#rg)" opacity="0.85"/>
<path d="M22.3 22.5 Q26.6 22.5 26.6 27 V36 Q26.6 46 36.5 47.5 Q44 48 49 44 Q44 54 36 54 Q18 54 18 36 V27 Q18 22.5 22.3 22.5 Z" fill="url(#ug2)"/>
<circle cx="53.8" cy="30" r="8.3" fill="#f9fafb"/>
<circle cx="53.8" cy="30" r="5.3" fill="#12d6f5"/>
<g stroke="url(#sg)" stroke-width="3.4" fill="none" stroke-linecap="butt">
<path d="M74.6 31 Q72.5 28.8 68.8 28.8 Q64 28.8 64 32 Q64 34.7 68.8 35.6 Q74.5 36.5 74.5 39.5 Q74.5 42.6 69 42.6 Q64.8 42.6 62.8 40.5"/>
<path d="M80.7 27.5 V50"/><circle cx="87.3" cy="35.7" r="6.7"/>
<circle cx="106.2" cy="35.7" r="7"/><path d="M114.6 27.5 V44"/>
<path d="M133.5 30.6 A7 7 0 1 0 133.5 40.8"/>
<path d="M140.8 27.5 V35.8 Q140.8 42.2 147 42.2 Q153.3 42.2 153.3 35.8 V27.5 M153.3 35 V42.5 Q153.3 48.6 146.5 48.6 Q142.5 48.6 140.3 46.5"/>
</g></svg><div class="t" style="left:1582.5px;width:80px;text-align:center;top:8.30px;font-size:15px;color:#fff;letter-spacing:0.2px">1</div><div class="t" style="left:1666.3px;width:80px;text-align:center;top:13.10px;font-size:15px;color:#fff;letter-spacing:0.2px">9</div><div class="t" style="left:1759.5px;width:80px;text-align:center;top:13.10px;font-size:15px;color:#fff;letter-spacing:0.2px">99+</div><svg style="position:absolute;left:1911.5px;top:9.6px" width="49" height="49" viewBox="0 0 49 49">
<defs><clipPath id="av"><circle cx="24.4" cy="24.4" r="24.4"/></clipPath>
<filter id="avb" x="-10%" y="-10%" width="120%" height="120%"><feGaussianBlur stdDeviation="0.55"/></filter></defs>
<g clip-path="url(#av)"><g filter="url(#avb)">
<rect width="49" height="49" fill="#d9d6d0"/>
<rect x="0" y="0" width="49" height="18" fill="#55584a"/>
<rect x="17" y="0" width="7" height="6" fill="#5a4535"/>
<rect x="33" y="0" width="16" height="17" fill="#3e3f38"/>
<path d="M34 2 L47 15 M38 0 L49 10 M34 10 L42 2" stroke="#cfcfc8" stroke-width="0.8"/>
<rect x="7" y="4" width="5" height="16" fill="#d8cfc2"/>
<rect x="29.5" y="0" width="3" height="17" fill="#b8b4aa"/>
<rect x="0" y="6" width="4" height="12" fill="#9a9a92"/>
<rect x="0" y="17" width="21" height="32" fill="#e4e2de"/>
<rect x="1" y="17" width="3" height="32" fill="#c9c7c2"/>
<rect x="10" y="20" width="2" height="25" fill="#cfcdc8"/>
<rect x="16" y="19" width="3" height="28" fill="#b9b6b0"/>
<rect x="19" y="21" width="8" height="20" fill="#dedcd8"/>
<rect x="31" y="14" width="18" height="3.5" fill="#c8c3bb"/>
<rect x="31" y="18.5" width="18" height="3.5" fill="#bdb7ae"/>
<rect x="35" y="21" width="14" height="4.5" fill="#9a6a40"/>
<rect x="30" y="25" width="15" height="21" fill="#4c433b"/>
<rect x="44" y="24" width="5" height="20" fill="#e8e8e6"/>
<rect x="0" y="42" width="30" height="7" fill="#cbbfae"/>
<path d="M16 17 Q21 13.5 26 13 Q31 13 33 16 L33.5 26 Q28 27.5 23 26 L21 19.5 L17.5 20 Z" fill="#ea3f8e"/>
<circle cx="26.8" cy="9.6" r="2.8" fill="#8a6a55"/>
<path d="M24 8 Q26.5 5.5 29.5 8 L29.5 15 L27.5 13.5 Z" fill="#5a4030"/>
<path d="M22.5 26 L33 25.5 L32.5 35 L30 43.5 L27.5 43.5 L28 33 L25 35.5 Z" fill="#95b4dd"/>
<rect x="28" y="43" width="3.5" height="3.5" fill="#f4f4f4"/>
</g></g>
<circle cx="42.1" cy="42" r="7.2" fill="#ffffff"/>
<circle cx="42.1" cy="42" r="4.8" fill="#50c800"/>
</svg><svg style="position:absolute;left:12px;top:962px" width="82" height="82" viewBox="0 0 82 82">
<defs><radialGradient id="wsh" cx="41" cy="41" r="41" gradientUnits="userSpaceOnUse"><stop offset="0.7" stop-color="#000" stop-opacity="0.10"/><stop offset="1" stop-color="#000" stop-opacity="0"/></radialGradient></defs>
<circle cx="41" cy="41" r="41" fill="url(#wsh)"/>
<circle cx="40.4" cy="39.3" r="29.5" fill="#4829ee"/>
<path d="M31 25 H49 Q53.5 25 53.5 29.5 V53.5 L47 49.5 H31 Q27.8 49.5 27.8 46.3 V28.2 Q27.8 25 31 25 Z" fill="#ffffff"/>
<path d="M31.8 44 Q40.6 49 49.5 44" stroke="#4829ee" stroke-width="1.8" fill="none" stroke-linecap="round"/>
</svg>
</body></html>
